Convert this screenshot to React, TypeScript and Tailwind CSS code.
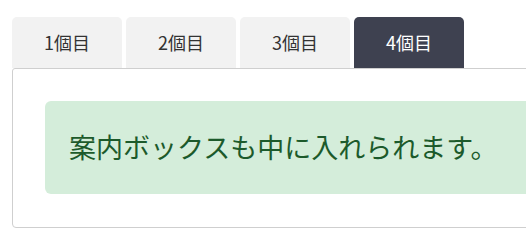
const tabs = ["1個目", "2個目", "3個目", "4個目"];

export default function App() {
  const active = 3;

  return (
    <div
      className="w-[526px] h-[235px] overflow-hidden bg-white pt-[17px] pl-[12px]"
      style={{ fontFamily: '"Noto Sans CJK JP", "Liberation Sans", sans-serif' }}
    >
      <div className="flex gap-[4px]">
        {tabs.map((t, i) => (
          <div
            key={t}
            className={
              i === active
                ? "w-[110px] h-[51px] rounded-t-[5px] bg-[#3e4150] text-white text-[18px] flex items-center justify-center"
                : "w-[110px] h-[51px] rounded-t-[5px] bg-[#f2f2f2] text-[#333] text-[18px] flex items-center justify-center"
            }
          >
            {t}
          </div>
        ))}
      </div>
      <div className="w-[600px] h-[160px] border border-[#cfcfcf] rounded-b-[4px] rounded-tl-[3px] bg-white p-8">
        <div className="h-[93px] rounded-l-[6px] bg-[#d4edda] text-[#1c5a2b] text-[27px] pl-[24px] flex items-center">
          案内ボックスも中に入れられます。
        </div>
      </div>
    </div>
  );
}
